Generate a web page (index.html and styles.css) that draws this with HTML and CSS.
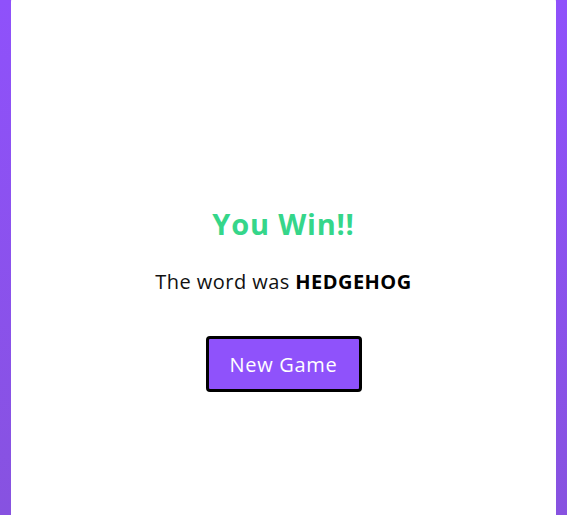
FILE: index.html
```html
<!DOCTYPE html>
<html lang="en">
<head>
<meta charset="utf-8">
<title>Hangman</title>
<link rel="stylesheet" href="styles.css">
</head>
<body>
<main class="card">
  <div class="result">
    <h1 class="title">You Win!!</h1>
    <p class="word">The word was <strong>HEDGEHOG</strong></p>
    <button class="new-game" type="button">New Game</button>
  </div>
</main>
</body>
</html>
```
FILE: styles.css
```css
html, body {
  margin: 0;
  padding: 0;
  height: 100%;
}
body {
  background: linear-gradient(180deg, #8f51fb 0%, #8752e0 100%);
  font-family: "Open Sans", "DejaVu Sans", sans-serif;
  overflow: hidden;
}
.card {
  box-sizing: border-box;
  margin: -8px 11px 0;
  height: 545px;
  background: #ffffff;
  border-radius: 10px;
  padding-top: 212px;
}
.result {
  display: flex;
  flex-direction: column;
  align-items: center;
}
.title {
  margin: 0;
  font-size: 29px;
  line-height: 40px;
  font-weight: 700;
  letter-spacing: 0.8px;
  color: #35d68a;
}
.word {
  margin: 24px 0 0;
  font-size: 20px;
  line-height: 28px;
  letter-spacing: 0.45px;
  color: #111;
}
.word strong {
  font-weight: 700;
  color: #000;
}
.new-game {
  margin-top: 40px;
  width: 156px;
  height: 56px;
  background: #8f52fb;
  border: 3px solid #000;
  border-radius: 4px;
  color: #fff;
  font-family: inherit;
  font-size: 20px;
  letter-spacing: 0.7px;
  cursor: pointer;
}
```
